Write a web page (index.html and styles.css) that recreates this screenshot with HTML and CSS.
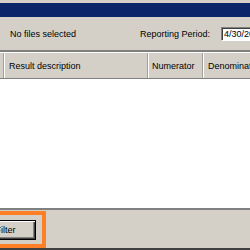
FILE: index.html
```html
<html lang="en">
<head>
    <meta charset="UTF-8">
    <title>Results</title>
    <link rel="stylesheet" href="styles.css">
</head>
<body>
<div id="window">
    <div class="caption"></div>
    <div class="toolbar">
        <span class="files">No files selected</span>
        <span class="period-label">Reporting Period:</span>
        <div class="period-input">4/30/2013</div>
    </div>
    <div class="grid-head">
        <div class="col col-first"></div>
        <div class="col col-desc">Result description</div>
        <div class="col col-num">Numerator</div>
        <div class="col col-den">Denominator</div>
    </div>
    <div class="grid-body"></div>
    <div class="footer">
        <div class="highlight">
            <button class="filter-btn" type="button">Filter</button>
        </div>
    </div>
</div>
</body>
</html>
```

FILE: styles.css
```css
body {
    margin: 0;
    padding: 0;
    overflow: hidden;
    background: #d4d0c8;
    font: 9px "Liberation Sans", Arial, sans-serif;
    color: #000;
}

#window {
    width: 250px;
    height: 250px;
    display: flex;
    flex-direction: column;
    padding-top: 3px;
    box-sizing: border-box;
    overflow: hidden;
}

.caption {
    height: 14px;
    background: #0a246a;
}

.toolbar {
    height: 33px;
    display: flex;
    align-items: center;
    padding-left: 10px;
    border-bottom: 2px solid #808080;
}

.files {
    flex: 1;
}

.period-label {
    flex: none;
    margin-right: 11px;
}

.period-input {
    flex: none;
    width: 60px;
    height: 10px;
    padding: 1px 2px;
    margin-right: -36px;
    background: #fff;
    border-top: 1px solid #808080;
    border-left: 1px solid #808080;
    border-bottom: 1px solid #fff;
    line-height: 10px;
    box-shadow: inset 1px 1px 0 #404040;
    white-space: nowrap;
}

.grid-head {
    height: 25px;
    display: flex;
    border-top: 1px solid #fff;
    border-bottom: 1px solid #808080;
}

.col {
    flex: none;
    display: flex;
    align-items: center;
    padding-left: 4px;
    border-left: 1px solid #a0a0a0;
    box-shadow: inset 1px 0 0 #fff;
    white-space: nowrap;
    overflow: hidden;
}

.col-first {
    width: 3px;
    padding-left: 0;
    border-left: none;
    box-shadow: none;
    border-right: 1px solid #a0a0a0;
}

.col-desc {
    width: 138px;
    border-left: none;
    padding-left: 5px;
}

.col-num {
    width: 50px;
}

.col-den {
    width: 60px;
    padding-left: 5px;
}

.grid-body {
    height: 129px;
    background: #fff;
    border-bottom: 2px solid #808080;
}

.footer {
    flex: 1;
    display: flex;
    align-items: flex-start;
    padding-top: 1px;
    border-bottom: 2px solid #404040;
}

.highlight {
    flex: none;
    width: 62px;
    height: 29px;
    margin-left: -30px;
    border: 4px solid #ff7f27;
    display: flex;
    align-items: center;
    justify-content: flex-end;
    padding-right: 6px;
    box-sizing: content-box;
}

.filter-btn {
    flex: none;
    width: 61px;
    height: 20px;
    margin: 0;
    padding: 0;
    background: #d4d0c8;
    border: 1px solid #000;
    box-shadow: inset 1px 1px 0 #fff, inset -1px -1px 0 #404040, inset -2px -2px 0 #808080;
    font: 9px "Liberation Sans", Arial, sans-serif;
    color: #000;
}
```
